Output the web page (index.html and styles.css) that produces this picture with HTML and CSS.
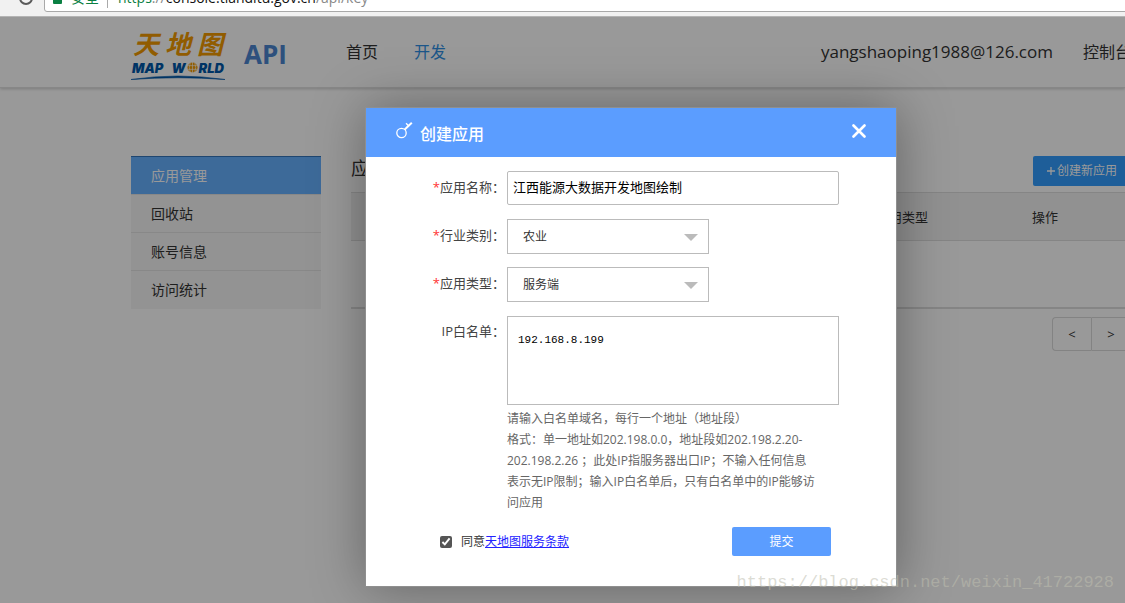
FILE: index.html
```html
<!DOCTYPE html>
<html lang="zh-CN">
<head>
<meta charset="utf-8">
<title>天地图 API 控制台</title>
<link rel="stylesheet" href="styles.css">
</head>
<body>
<div class="browser-bar">
  <svg class="reload" viewBox="0 0 16 16" width="16" height="16" aria-hidden="true"><circle cx="8" cy="8" r="6" fill="none" stroke="#5a5a5a" stroke-width="2"/></svg>
  <div class="address">
    <svg class="lock" viewBox="0 0 9 12" width="9" height="12" aria-hidden="true"><path d="M2 6V3.500a2.500 2.500 0 0 1 5 0V6" fill="none" stroke="#0b8043" stroke-width="1.500"/><rect y="5" width="9" height="7" rx="1" fill="#0b8043"/></svg>
    <span class="secure">安全</span>
    <span class="url"><span class="scheme">https</span><span class="dim">://</span>console.tianditu.gov.cn<span class="dim">/api/key</span></span>
  </div>
</div>

<div class="page">
  <header class="site-header">
    <div class="container header-row">
      <a class="logo" href="#">
        <span class="logo-cn"><span>天</span><span>地</span><span>图</span></span>
        <span class="logo-en">
          <span>MAP</span>
          <span class="world">W<svg viewBox="0 0 12 12" width="13" height="11" aria-hidden="true"><circle cx="6" cy="6" r="5.500" fill="#f29a00"/><path d="M1 4h10M1 8h10M6 0v12M3.500 1q-2 5 0 10M8.500 1q2 5 0 10" fill="none" stroke="#fff" stroke-width=".7"/></svg>RLD</span>
        </span>
        <svg class="swoosh" viewBox="0 0 94 5" width="94" height="5" aria-hidden="true"><path d="M0 4.500Q47-2.500 94 4.500Q47 1 0 4.500Z" fill="#0058a8" stroke="#0058a8" stroke-width=".6"/></svg>
      </a>
      <span class="api">API</span>
      <nav class="nav">
        <a href="#">首页</a>
        <a class="current" href="#">开发</a>
      </nav>
      <div class="account">
        <a class="email" href="#">yangshaoping1988@126.com</a>
        <a href="#">控制台</a>
      </div>
    </div>
  </header>

  <div class="container columns">
    <nav class="sidebar">
      <a class="active" href="#">应用管理</a>
      <a href="#">回收站</a>
      <a href="#">账号信息</a>
      <a href="#">访问统计</a>
    </nav>
    <main class="content">
      <div class="title-row">
        <h1>应用管理</h1>
        <button class="create" type="button"><svg viewBox="0 0 8 8" width="8" height="8" aria-hidden="true"><path d="M4 0v8M0 4h8" stroke="currentColor" stroke-width="1.300"/></svg>创建新应用</button>
      </div>
      <table class="apps">
        <thead><tr><th class="col-main"></th><th class="col-type">应用类型</th><th>操作</th></tr></thead>
        <tbody><tr><td colspan="3"></td></tr></tbody>
      </table>
      <div class="pager">
        <button type="button">&lt;</button>
        <button type="button">&gt;</button>
      </div>
    </main>
  </div>

  <div class="overlay">
    <section class="dialog" role="dialog" aria-labelledby="dialog-title">
      <div class="dialog-head">
        <svg class="key" viewBox="0 0 17 17" width="17" height="17" aria-hidden="true"><circle cx="5.500" cy="11" r="4.700" fill="none" stroke="#fff" stroke-width="1.300"/><path d="M8.700 7.500L15.800.8" fill="none" stroke="#fff" stroke-width="2"/><path d="M10 1.200l2.800 2.800" fill="none" stroke="#fff" stroke-width="1.300"/></svg>
        <h2 id="dialog-title">创建应用</h2>
        <button class="close" type="button" aria-label="关闭"><svg viewBox="0 0 14 14" width="14" height="14" aria-hidden="true"><path d="M1.500 1.500l11 11M12.500 1.500l-11 11" stroke="#fff" stroke-width="2.600" stroke-linecap="round"/></svg></button>
      </div>
      <form class="form">
        <div class="field">
          <label for="name"><span class="required">*</span>应用名称：</label>
          <input class="box" id="name" type="text" value="江西能源大数据开发地图绘制">
        </div>
        <div class="field">
          <label for="industry"><span class="required">*</span>行业类别：</label>
          <div class="select"><select class="box" id="industry"><option>农业</option></select></div>
        </div>
        <div class="field">
          <label for="kind"><span class="required">*</span>应用类型：</label>
          <div class="select"><select class="box" id="kind"><option>服务端</option></select></div>
        </div>
        <div class="field">
          <label for="ips">IP白名单：</label>
          <div class="stack">
            <textarea class="box" id="ips">192.168.8.199</textarea>
            <p class="help">请输入白名单域名，每行一个地址（地址段）<br>格式：单一地址如202.198.0.0，地址段如202.198.2.20-202.198.2.26 ；此处IP指服务器出口IP；不输入任何信息表示无IP限制；输入IP白名单后，只有白名单中的IP能够访问应用</p>
          </div>
        </div>
        <div class="actions">
          <input id="agree" type="checkbox" checked>
          <label for="agree">同意<a href="#">天地图服务条款</a></label>
          <button class="submit" type="button">提交</button>
        </div>
      </form>
    </section>
  </div>
  <div class="watermark">https://blog.csdn.net/weixin_41722928</div>
</div>
</body>
</html>
```

FILE: styles.css
```css
* { box-sizing: border-box; }

body {
  margin: 0;
  height: 100vh;
  display: flex;
  flex-direction: column;
  overflow: hidden;
  font: 14px/20px "Open Sans", "Noto Sans CJK SC", sans-serif;
  color: #333;
  background: #fff;
}

a { color: inherit; text-decoration: none; }
button, input, select, textarea { font: inherit; }
button { border: 0; padding: 0; background: none; color: inherit; cursor: pointer; }
h1, h2, p { margin: 0; font-weight: normal; }

/* Browser toolbar */
.browser-bar {
  flex: none;
  height: 17px;
  display: flex;
  align-items: flex-end;
  padding: 0 0 4px 18px;
  overflow: hidden;
  background: #f1f1f1;
  border-bottom: 1px solid #b4b4b4;
}
.reload { flex: none; margin: 0 10px 6px 0; }
.address {
  flex: 1;
  display: flex;
  align-items: center;
  height: 28px;
  margin-right: -4px;
  padding: 0 8px 1px;
  border: 1px solid #a9a9a9;
  border-radius: 3px;
  background: #fff;
  color: #111;
  font-size: 14px;
}
.lock { margin-right: 9px; }
.secure { padding-right: 8px; margin-right: 10px; border-right: 1px solid #aaa; color: #0b8043; }
.scheme { color: #0b8043; }
.dim { color: #888; }

/* Page */
.page { position: relative; flex: 1; overflow: hidden; }
.container { max-width: 1000px; margin: 0 -6px 0 131px; }
.site-header { border-bottom: 1px solid #e2e2e2; box-shadow: 0 1px 3px rgba(0, 0, 0, .2); }
.header-row { display: flex; align-items: center; height: 70px; font-size: 16px; }

.logo { display: flex; flex-direction: column; width: 94px; }
.logo-cn {
  display: flex;
  justify-content: space-between;
  padding: 0 2px;
  color: #f29a00;
  font: italic bold 26px/36px "Noto Sans CJK SC", sans-serif;
}
.logo-en {
  display: flex;
  justify-content: space-between;
  padding: 0 1px;
  color: #0058a8;
  font: italic 900 13px/14px Inter, sans-serif;
}
.world { display: flex; align-items: center; }
.api { margin-left: 19px; padding-top: 4px; color: #4b85d0; font-size: 26px; font-weight: bold; }
.nav { display: flex; gap: 36px; margin-left: 59px; }
.nav .current { color: #2f8fe5; }
.account { display: flex; gap: 30px; margin-left: auto; white-space: nowrap; }
.email { font-size: 17px; }

.columns { display: flex; gap: 30px; padding-top: 68px; }
.sidebar { flex: none; width: 190px; display: flex; flex-direction: column; }
.sidebar a {
  height: 38px;
  padding-left: 20px;
  line-height: 38px;
  background: #f5f5f5;
  border-bottom: 1px solid #e3e3e3;
}
.sidebar a:last-child { border-bottom: 0; }
.sidebar .active { height: 39px; background: #66b1ff; border-top: 1px solid #3475bb; color: #fff; }

.content { flex: 1; min-width: 0; }
.title-row { display: flex; justify-content: space-between; height: 36px; }
.title-row h1 { font-size: 18px; line-height: 24px; }
.create {
  display: flex;
  align-items: center;
  gap: 2px;
  height: 30px;
  padding: 0 14px;
  border-radius: 2px;
  background: #329dff;
  color: #fff;
  font-size: 12px;
}
.apps { width: 100%; border-collapse: collapse; table-layout: fixed; font-size: 13px; }
.apps th {
  height: 48px;
  padding: 0 18px;
  text-align: left;
  font-weight: normal;
  background: #f2f2f2;
  border: solid #dedede;
  border-width: 1px 0;
}
.col-main { width: 65%; }
.col-type { width: 20%; }
.apps td { height: 67px; border-bottom: 2px solid #dedede; }
.pager { display: flex; justify-content: flex-end; padding-top: 8px; }
.pager button { width: 40px; height: 34px; border: 1px solid #dadada; font-size: 13px; }
.pager button:first-child { width: 39px; border-radius: 4px 0 0 4px; border-right: 0; }
.pager button:last-child { border-radius: 0 4px 4px 0; }

/* Dialog */
.overlay {
  position: absolute;
  inset: 0 -137px 0 0;
  display: flex;
  justify-content: center;
  align-items: flex-start;
  padding-top: 90px;
  background: rgba(0, 0, 0, .4);
}
.dialog {
  width: 532px;
  border: 1px solid #8f8f8f;
  background: #fff;
  box-shadow: 1px 1px 50px rgba(0, 0, 0, .35);
}
.dialog-head {
  display: flex;
  align-items: center;
  height: 49px;
  padding: 0 30px 4px 30px;
  background: #5b9dff;
  color: #fff;
}
.key { margin-right: 7px; }
.dialog-head h2 { font-size: 16px; font-weight: 500; line-height: 20px; padding-top: 6px; }
.close { display: flex; margin-left: auto; }

.form { display: flex; flex-direction: column; gap: 14px; padding: 14px 57px 30px 0; font-size: 12px; }
.field { display: flex; }
.field > label { flex: none; width: 141px; padding-right: 2px; text-align: right; font-size: 13px; line-height: 32px; color: #444; }
.required { color: #f33; }
.box { display: block; width: 100%; border: 1px solid #bbb; border-radius: 0; background: #fff; color: #333; outline: 0; }
input.box { height: 34px; padding: 0 5px 3px; border-radius: 2px; color: #000; font-size: 13px; }
.select { position: relative; width: 202px; }
.select::after {
  content: "";
  position: absolute;
  right: 11px;
  top: 15px;
  border: 7px solid transparent;
  border-top-color: #bbb;
  border-bottom: 0;
  pointer-events: none;
}
select.box { height: 35px; padding: 1px 15px 0; appearance: none; }
.field:has(.select) { margin-bottom: -1px; }
.stack { flex: 1; padding-top: 1px; }
textarea.box {
  height: 89px;
  padding: 13px 10px;
  resize: none;
  color: #000;
  font: 11px/20px "Liberation Mono", monospace;
}
.help { width: 310px; padding-top: 3px; line-height: 21px; color: #666; }
.actions { display: flex; align-items: center; padding-left: 74px; }
.actions input { width: 12px; height: 12px; margin: 0 9px 0 0; accent-color: #555; }
.actions a { color: #22f; text-decoration: underline; }
.submit {
  width: 99px;
  height: 29px;
  margin: 0 8px 0 auto;
  border-radius: 2px;
  background: #5b9dff;
  color: #fff;
}

.watermark {
  position: absolute;
  right: 11px;
  bottom: 10px;
  color: rgba(190, 190, 175, .55);
  font: 17px/20px "Liberation Mono", monospace;
}
```
